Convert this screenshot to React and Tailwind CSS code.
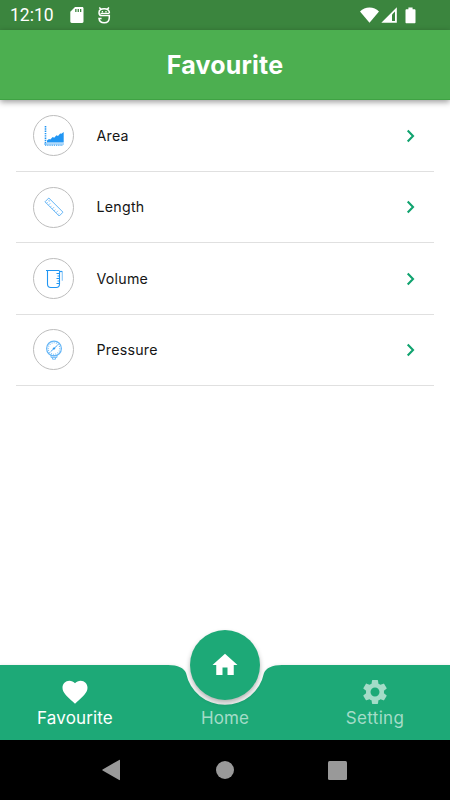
import { MdFavorite, MdHome, MdSettings } from 'react-icons/md';

const AreaIcon = () => (
  <svg width="20" height="20" viewBox="0 0 20 20" fill="none">
    <path d="M1.5 0v19" stroke="#2196f3" strokeWidth="1.6" strokeDasharray="1.4 .9" />
    <path d="M0 18h20" stroke="#64b5f6" strokeWidth="1" />
    <path d="M1 19.2h18" stroke="#64b5f6" strokeWidth="1.5" strokeDasharray="1.3 .9" />
    <path d="M3 16.5V14.5l2-1.4 1.3.5 2.4-2.5 1.5.6 2.3-2.4 1.5.6 2.2-2.5 1.2.4L19.7 6v10.5z" fill="#2196f3" />
  </svg>
);

const LengthIcon = () => (
  <svg width="20" height="20" viewBox="0 0 20 20" fill="none" stroke="#64b5f6" strokeWidth="1">
    <path d="M4.8 1 19 15.2 15.2 19 1 4.8z" />
    <path d="m2.5 6.3 1.3-1.3M4.4 8.2l2-2M6.3 10.1l1.3-1.3M8.2 12l2-2M10.1 13.9l1.3-1.3M12 15.8l2-2M13.9 17.7l1.3-1.3" strokeWidth=".7" />
    <circle cx="5.2" cy="3.8" r=".6" strokeWidth=".5" />
  </svg>
);

const VolumeIcon = () => (
  <svg width="20" height="20" viewBox="0 0 20 20" fill="none" stroke="#2196f3">
    <path d="M2 1.5h13.5M3.5 1.5V15c0 2.3 1.2 3.5 3.3 3.5h5.4c2.2 0 3.3-1.2 3.3-3.5V2" strokeWidth="1.1" />
    <path d="M12.5 4.5h3M13.5 7h2M12.5 9.5h3M13.5 12h2M12.5 14.5h3" strokeWidth="1" />
    <path d="M15.5 2.6h2.8v9.2" stroke="#90caf9" strokeWidth="1.2" />
    <path d="M15 2.4h3" strokeWidth="1" />
  </svg>
);

const PressureIcon = () => (
  <svg width="20" height="20" viewBox="0 0 20 20" fill="none" stroke="#64b5f6">
    <circle cx="10" cy="8.5" r="7.4" strokeWidth="1.2" />
    <circle cx="10" cy="8.5" r="5.8" strokeWidth="1.2" strokeDasharray=".8 1.4" />
    <path d="m6.6 11.7 7-6.6" stroke="#42a5f5" strokeWidth="1" />
    <circle cx="10" cy="8.5" r=".7" fill="#2196f3" stroke="#2196f3" />
    <path d="M7 15.6h6v1.8H7zM8.500 17.500v1.700h3v-1.700" strokeWidth=".9" />
  </svg>
);

const units = [
  { name: 'Area', Icon: AreaIcon },
  { name: 'Length', Icon: LengthIcon },
  { name: 'Volume', Icon: VolumeIcon },
  { name: 'Pressure', Icon: PressureIcon },
];

function StatusBar() {
  return (
    <div className="h-[30px] shrink-0 bg-[#3b853e] flex items-center pl-[10px] pr-[34px] text-white">
      <span className="font-['Roboto',sans-serif] text-[17.5px] leading-none w-[60px] pt-px">12:10</span>
      <svg width="14" height="16" viewBox="0 0 14 16" fill="#fff">
        <path fillRule="evenodd" d="M5 0h7.2C13 0 13.5.6 13.5 1.3v13.2c0 .8-.5 1.4-1.3 1.4H1.7c-.8 0-1.4-.6-1.4-1.4V4.7zM5.2 2v3h1.3V2zM7.6 2v3h1.3V2zM10 2v3h1.3V2z" />
      </svg>
      <svg className="ml-[14px]" width="13" height="17" viewBox="0 0 13 17" fill="none" stroke="#fff" strokeWidth="1.5">
        <path d="m1.300.5 1.600 1.600M11 .5 9.400 2.100" />
        <path d="M11.300 6.200V5c-.4-2-2-3.200-5.100-3.200C2.900 1.800 1 3.300 1 5.700c0 1.900.9 2.900 2.700 2.900h7.600v2.100c0 3.200-2 5-5.100 5S1.200 13.900 1 11.400h2.600" />
        <path d="M2.500 6.400h8.800" strokeWidth="1.200" />
        <path d="M4.400 4v1.500M8 4v1.500" strokeWidth="1.300" />
      </svg>
      <div className="ml-auto flex items-center">
        <svg width="19" height="16" viewBox="0 0 19 16" fill="#fff">
          <path d="M9.5 15.8 0 4.4C2.6 1.8 5.8.4 9.5.4S16.4 1.8 19 4.4z" />
        </svg>
        <svg className="ml-[2px]" width="16" height="16" viewBox="0 0 16 16">
          <path d="M15.8.3v15.5H.3z" fill="#fff" />
          <path d="M14 4.5v9.5h-3V7.5z" fill="#3b853e" />
        </svg>
        <svg className="ml-[8px]" width="11" height="17" viewBox="0 0 11 17" fill="#fff">
          <path d="M3.400.5h4.200v1.700h1.900c.6 0 1 .5 1 1v12c0 .7-.4 1.100-1 1.100h-8c-.6 0-1-.4-1-1.100v-12c0-.5.4-1 1-1h1.900z" />
        </svg>
      </div>
    </div>
  );
}

function UnitRow({ name, Icon }) {
  return (
    <li className="h-[71.4px] flex items-center border-b border-[#e0e0e0] pl-[17px] pr-[19px]">
      <span className="w-[41px] h-[41px] rounded-full border border-[#bdbdbd] flex items-center justify-center shrink-0">
        <Icon />
      </span>
      <span className="ml-[22.5px] text-[14.2px] leading-5 tracking-[0.25px] text-[#151515]">{name}</span>
      <svg className="ml-auto" width="9" height="14" viewBox="0 0 9 14" fill="none" stroke="#10a36f" strokeWidth="2.1">
        <path d="m1.7 1.6 5.3 5.4-5.3 5.4" />
      </svg>
    </li>
  );
}

function BottomNav() {
  return (
    <nav className="relative h-[75px] shrink-0">
      {/* bar with the notch cut out for the home button */}
      <svg className="absolute inset-0 drop-shadow-[0_-1px_1px_rgba(0,0,0,0.05)]" width="450" height="75" viewBox="0 0 450 75">
        <path d="M0 0h168c10 0 16 3 18 8a39.8 39.8 0 0 0 78 0c2-5 8-8 18-8h168v75H0z" fill="#1da977" />
      </svg>
      <button className="absolute left-[190px] -top-[35px] w-[70px] h-[70px] rounded-full bg-[#1da977] shadow-[0_3px_5px_rgba(0,0,0,0.3)] flex items-center justify-center text-white">
        <MdHome size={30} />
      </button>
      <div className="relative pointer-events-none grid grid-cols-3 h-full text-[17px] leading-[22px] tracking-[0.15px] text-[#a4dcc8]">
        <div className="flex flex-col items-center pt-3 text-white">
          <MdFavorite size={30} />
          <span>Favourite</span>
        </div>
        <div className="flex flex-col items-center pt-[42px]">
          <span>Home</span>
        </div>
        <div className="flex flex-col items-center pt-3">
          <MdSettings size={30} />
          <span className="tracking-[0.35px]">Setting</span>
        </div>
      </div>
    </nav>
  );
}

function SystemNav() {
  return (
    <div className="h-[60px] shrink-0 bg-black flex items-center justify-between pl-[102px] pr-[103px]">
      <svg width="19" height="22" viewBox="0 0 19 22" fill="#999">
        <path d="M17.2.9c.5-.3.8 0 .8.6v19c0 .6-.3.9-.8.6L.6 11.6c-.5-.3-.5-.9 0-1.2z" />
      </svg>
      <span className="w-[18px] h-[18px] rounded-full bg-[#999]" />
      <span className="w-[19px] h-[19px] rounded-[1.5px] bg-[#999]" />
    </div>
  );
}

export default function App() {
  return (
    <div className="w-[450px] h-[800px] flex flex-col bg-white overflow-hidden font-['Inter',sans-serif]">
      <StatusBar />
      <header className="relative h-[70px] shrink-0 bg-[#4caf50] border-b border-[#3fa243] shadow-[0_2px_6px_rgba(0,0,0,0.4)] flex items-center justify-center pt-[2px]">
        <h1 className="text-white text-[25px] font-bold leading-none tracking-[0.2px]">Favourite</h1>
      </header>
      <ul className="flex-1 px-4 pt-[0.6px]">
        {units.map(unit => (
          <UnitRow key={unit.name} {...unit} />
        ))}
      </ul>
      <BottomNav />
      <SystemNav />
    </div>
  );
}
